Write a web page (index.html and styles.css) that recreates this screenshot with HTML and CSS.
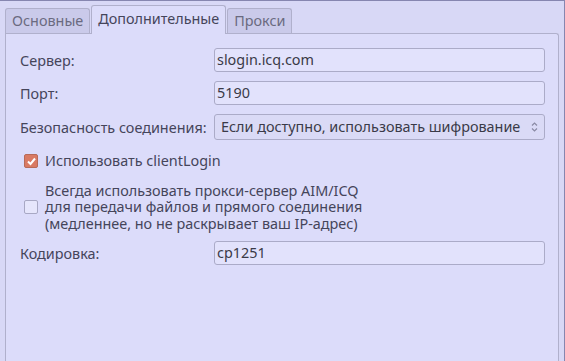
FILE: index.html
```html
<!DOCTYPE html>
<html lang="ru">
<head>
    <meta charset="UTF-8">
    <title>Параметры ICQ</title>
    <link rel="stylesheet" href="styles.css">
</head>
<body>
    <div class="window">
        <div class="tabs">
            <div class="tab">Основные</div>
            <div class="tab active">Дополнительные</div>
            <div class="tab">Прокси</div>
        </div>
        <div class="pane">
            <div class="row">
                <label class="label">Сервер:</label>
                <div class="field">slogin.icq.com</div>
            </div>
            <div class="row">
                <label class="label">Порт:</label>
                <div class="field">5190</div>
            </div>
            <div class="row">
                <label class="label">Безопасность соединения:</label>
                <div class="field combo">
                    <span>Если доступно, использовать шифрование</span>
                    <svg class="arrows" width="7" height="12" viewBox="0 0 7 12">
                        <path d="M1 4.5 L3.5 2 L6 4.5" fill="none" stroke="#8a8aa4" stroke-width="1.2"/>
                        <path d="M1 7.5 L3.5 10 L6 7.5" fill="none" stroke="#8a8aa4" stroke-width="1.2"/>
                    </svg>
                </div>
            </div>
            <div class="check-row first">
                <span class="box checked">
                    <svg width="11" height="11" viewBox="0 0 11 11">
                        <path d="M2 5.5 L4.5 8 L9 2.5" fill="none" stroke="#fff" stroke-width="2"/>
                    </svg>
                </span>
                <span class="check-text">Использовать clientLogin</span>
            </div>
            <div class="check-row second">
                <span class="box"></span>
                <span class="check-text">Всегда использовать прокси-сервер AIM/ICQ<br>для передачи файлов и прямого соединения<br>(медленнее, но не раскрывает ваш IP-адрес)</span>
            </div>
            <div class="row">
                <label class="label">Кодировка:</label>
                <div class="field">cp1251</div>
            </div>
        </div>
    </div>
</body>
</html>
```

FILE: styles.css
```css
html, body {
    margin: 0;
    height: 100%;
    overflow: hidden;
}
body {
    background-color: #d8d8f6;
    font-family: "Noto Sans", sans-serif;
    font-size: 14.4px;
    color: #45455a;
}
.window {
    height: 100%;
    box-sizing: border-box;
    display: flex;
    flex-direction: column;
    border-top: 1px solid #8686b0;
    border-right: 1px solid #8686b0;
    padding: 4px 5px 0 5px;
}
.tabs {
    display: flex;
    align-items: flex-end;
    height: 28px;
}
.tab {
    height: 24px;
    line-height: 24px;
    padding: 0 6px;
    border: 1px solid #b0b0cc;
    border-bottom: none;
    border-radius: 3px 3px 0 0;
    background-color: #cacaea;
    color: #6a6a80;
    margin-right: 1px;
}
.tab.active {
    height: 28px;
    line-height: 26px;
    background-color: #dcdcfa;
    color: #45455a;
    position: relative;
    top: 1px;
}
.pane {
    flex: 1;
    border: 1px solid #b0b0cc;
    border-bottom: none;
    border-radius: 0 3px 0 0;
    background-color: #dcdcfa;
    padding: 14px 13px 0 14px;
}
.row {
    display: flex;
    align-items: center;
    margin-bottom: 9px;
}
.label {
    width: 194px;
}
.field {
    flex: 1;
    height: 22px;
    line-height: 22px;
    border: 1px solid #ababc8;
    border-radius: 3px;
    background-color: #e2e2fc;
    padding: 0 2px;
    color: #3a3a48;
}
.combo {
    height: 24px;
    display: flex;
    align-items: center;
    justify-content: space-between;
    padding: 0 6px;
    background-color: #dadaf6;
}
.check-row {
    display: flex;
    align-items: center;
    gap: 7px;
    padding-left: 4px;
}
.check-row.first {
    margin-top: 13px;
}
.check-row.second {
    margin-top: 13px;
    margin-bottom: 9px;
}
.box {
    width: 12px;
    height: 12px;
    border: 1px solid #a8a8c4;
    border-radius: 2px;
    background-color: #e6e6fc;
    display: flex;
    align-items: center;
    justify-content: center;
}
.box.checked {
    background-color: #d97a64;
    border-color: #b86a58;
}
.check-text {
    line-height: 16.5px;
}
```
